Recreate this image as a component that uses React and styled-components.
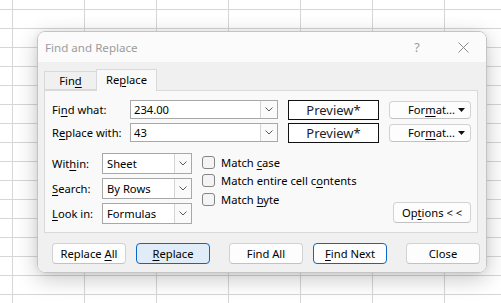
import React from "react";
import styled, { createGlobalStyle } from "styled-components";

const GlobalStyle = createGlobalStyle`
  html, body {
    margin: 0;
    padding: 0;
  }
  body {
    font-family: "Noto Sans", "Open Sans", sans-serif;
  }
`;

const Sheet = styled.div`
  width: 501px;
  height: 303px;
  box-sizing: border-box;
  padding: 31px 0 0 37px;
  overflow: hidden;
  background-color: #fff;
  background-image: linear-gradient(to right, #d6d6d6 1px, transparent 1px),
    linear-gradient(to bottom, #d6d6d6 1px, transparent 1px);
  background-size: 72px 100%, 100% 19px;
  background-position: 12px 0, 0 9px;
`;

const Dialog = styled.div`
  width: 450px;
  height: 242px;
  box-sizing: border-box;
  border: 1px solid #c4c4c4;
  border-radius: 8px;
  overflow: hidden;
  box-shadow: 0 6px 22px rgba(0, 0, 0, 0.22), 0 0 6px rgba(0, 0, 0, 0.06);
  display: flex;
  flex-direction: column;
  font-family: "Noto Sans", "Open Sans", sans-serif;
  font-size: 11.2px;
  color: #000;
`;

const TitleBar = styled.div`
  height: 30px;
  flex-shrink: 0;
  display: flex;
  align-items: center;
  padding-left: 7px;
  background: #fbfbfb;
  color: #9b9b9b;
  font-size: 11.6px;
`;

const Title = styled.div`
  flex: 1;
`;

const TitleButton = styled.div`
  width: 46px;
  height: 30px;
  display: flex;
  align-items: center;
  justify-content: center;
  color: #9a9a9a;
  font-size: 12.5px;
`;

const Body = styled.div`
  flex: 1;
  background: #f0f0f0;
  padding: 7px 8px 0 6px;
`;

const TabRow = styled.div`
  height: 21px;
  display: flex;
  align-items: flex-end;
`;

const Tab = styled.div`
  box-sizing: border-box;
  width: ${(p) => (p.$active ? "61px" : "52px")};
  height: ${(p) => (p.$active ? "22px" : "19px")};
  line-height: ${(p) => (p.$active ? "20px" : "17px")};
  margin-bottom: ${(p) => (p.$active ? "-1px" : "0")};
  position: relative;
  z-index: ${(p) => (p.$active ? 1 : 0)};
  text-align: center;
  white-space: nowrap;
  border: 1px solid #d9d9d9;
  border-bottom: ${(p) => (p.$active ? "none" : "1px solid #d9d9d9")};
  border-right: ${(p) => (p.$active ? "1px solid #d9d9d9" : "none")};
  background: ${(p) => (p.$active ? "#f9f9f9" : "#f0f0f0")};
`;

const Panel = styled.div`
  box-sizing: border-box;
  height: 143px;
  border: 1px solid #d9d9d9;
  background: #f9f9f9;
  padding: 9px 6px 0 7px;
`;

const FieldGrid = styled.div`
  display: grid;
  grid-template-columns: 68px 148px 91px 82px;
  grid-auto-rows: 19px;
  column-gap: 10px;
  row-gap: 4px;
  align-items: center;
`;

const Label = styled.div`
  white-space: nowrap;
`;

const Key = styled.span`
  text-decoration: underline;
  text-underline-offset: 2px;
`;

const Combo = styled.div`
  box-sizing: border-box;
  height: ${(p) => p.$h || 19}px;
  display: flex;
  border: 1px solid #a8a8a8;
  background: #fff;
`;

const ComboText = styled.div`
  flex: 1;
  display: flex;
  align-items: center;
  padding-left: ${(p) => p.$pad || 3}px;
  white-space: nowrap;
`;

const DropButton = styled.div`
  width: 16px;
  display: flex;
  align-items: center;
  justify-content: center;
  border-left: 1px solid #d4d4d4;
  background: #fafafa;
`;

const Preview = styled.div`
  box-sizing: border-box;
  height: 20px;
  border: 1px solid #111;
  background: #fff;
  display: flex;
  align-items: center;
  justify-content: center;
  font-size: 13px;
  color: #1c1c2a;
`;

const Button = styled.div`
  box-sizing: border-box;
  width: ${(p) => p.$w || 74}px;
  height: ${(p) => p.$h || 21}px;
  line-height: ${(p) => (p.$h || 21) - 2}px;
  text-align: center;
  border: 1px solid ${(p) => (p.$focus ? "#0a68c4" : "#d2d2d2")};
  border-bottom-color: ${(p) => (p.$focus ? "#0a68c4" : "#c2c2c2")};
  border-radius: 4px;
  background: ${(p) => (p.$primary ? "#e0ecf8" : "#fdfdfd")};
  white-space: nowrap;
`;

const FormatButton = styled(Button)`
  display: flex;
  align-items: center;
  justify-content: space-between;
  padding: 0 5px 0 18px;
`;

const Lower = styled.div`
  display: flex;
  align-items: flex-start;
  margin-top: 11px;
  height: 71px;
`;

const SelectGrid = styled.div`
  display: grid;
  grid-template-columns: 50px 90px;
  grid-auto-rows: 21px;
  row-gap: 4px;
  align-items: center;
`;

const CheckList = styled.div`
  display: flex;
  flex-direction: column;
  margin-left: 10px;
`;

const CheckRow = styled.div`
  height: 18.5px;
  display: flex;
  align-items: center;
  gap: 6px;
  white-space: nowrap;
`;

const Box = styled.div`
  box-sizing: border-box;
  width: 13px;
  height: 13px;
  border: 1px solid #858585;
  border-radius: 3px;
  background: #f4f4f4;
`;

const OptionsButton = styled(Button)`
  margin-left: auto;
  align-self: flex-end;
  margin-bottom: 1px;
`;

const ButtonRow = styled.div`
  display: flex;
  gap: 19px;
  margin-top: 10px;
  padding-left: 8px;
`;

const ButtonGroup = styled.div`
  display: flex;
  gap: 10px;
`;

const Chevron = () => (
  <svg width="8" height="5" viewBox="0 0 8 5">
    <path d="M0.5 0.5 L4 4 L7.5 0.5" fill="none" stroke="#5a5a5a" strokeWidth="1" />
  </svg>
);

const Caret = () => (
  <svg width="7" height="4" viewBox="0 0 7 4">
    <polygon points="0,0 7,0 3.5,4" fill="#111" />
  </svg>
);

const CloseIcon = () => (
  <svg width="11" height="11" viewBox="0 0 11 11">
    <path d="M0.5 0.5 L10.5 10.5 M10.5 0.5 L0.5 10.5" stroke="#8c8c8c" strokeWidth="1" />
  </svg>
);

const Field = ({ value }) => (
  <Combo>
    <ComboText>{value}</ComboText>
    <DropButton>
      <Chevron />
    </DropButton>
  </Combo>
);

const Select = ({ value }) => (
  <Combo $h={21}>
    <ComboText $pad={4}>{value}</ComboText>
    <DropButton>
      <Chevron />
    </DropButton>
  </Combo>
);

const Format = () => (
  <FormatButton $w={82} $h={18}>
    <span>
      For<Key>m</Key>at...
    </span>
    <Caret />
  </FormatButton>
);

const Check = ({ children }) => (
  <CheckRow>
    <Box />
    <span>{children}</span>
  </CheckRow>
);

export default function App() {
  return (
    <>
      <GlobalStyle />
      <Sheet>
        <Dialog>
          <TitleBar>
            <Title>Find and Replace</Title>
            <TitleButton>?</TitleButton>
            <TitleButton>
              <CloseIcon />
            </TitleButton>
          </TitleBar>
          <Body>
            <TabRow>
              <Tab>
                Fin<Key>d</Key>
              </Tab>
              <Tab $active>
                Re<Key>p</Key>lace
              </Tab>
            </TabRow>
            <Panel>
              <FieldGrid>
                <Label>
                  Fi<Key>n</Key>d what:
                </Label>
                <Field value="234.00" />
                <Preview>Preview*</Preview>
                <Format />
                <Label>
                  R<Key>e</Key>place with:
                </Label>
                <Field value="43" />
                <Preview>Preview*</Preview>
                <Format />
              </FieldGrid>
              <Lower>
                <SelectGrid>
                  <Label>
                    Wit<Key>h</Key>in:
                  </Label>
                  <Select value="Sheet" />
                  <Label>
                    <Key>S</Key>earch:
                  </Label>
                  <Select value="By Rows" />
                  <Label>
                    <Key>L</Key>ook in:
                  </Label>
                  <Select value="Formulas" />
                </SelectGrid>
                <CheckList>
                  <Check>
                    Match <Key>c</Key>ase
                  </Check>
                  <Check>
                    Match entire cell c<Key>o</Key>ntents
                  </Check>
                  <Check>
                    Match <Key>b</Key>yte
                  </Check>
                </CheckList>
                <OptionsButton $w={78}>
                  Op<Key>t</Key>ions &lt; &lt;
                </OptionsButton>
              </Lower>
            </Panel>
            <ButtonRow>
              <ButtonGroup>
                <Button>
                  Replace <Key>A</Key>ll
                </Button>
                <Button $primary $focus>
                  <Key>R</Key>eplace
                </Button>
              </ButtonGroup>
              <ButtonGroup>
                <Button>Find All</Button>
                <Button $focus>
                  <Key>F</Key>ind Next
                </Button>
              </ButtonGroup>
              <ButtonGroup>
                <Button>Close</Button>
              </ButtonGroup>
            </ButtonRow>
          </Body>
        </Dialog>
      </Sheet>
    </>
  );
}
